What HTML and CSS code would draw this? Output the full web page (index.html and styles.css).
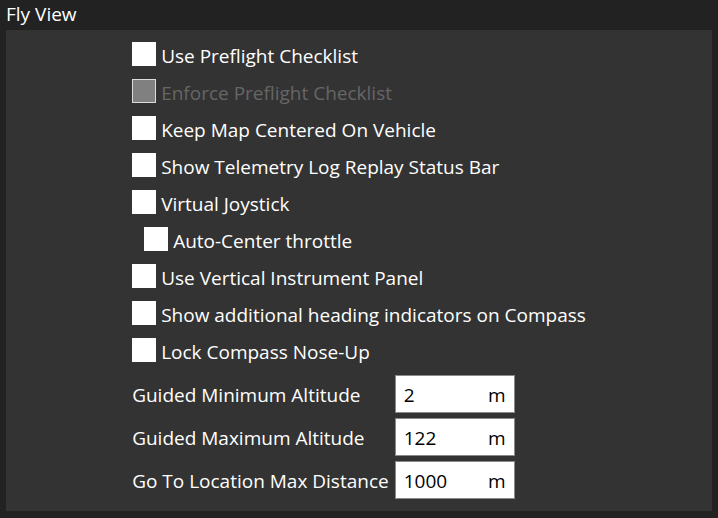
FILE: index.html
```html
<!DOCTYPE html>
<html>
<head>
<meta charset="utf-8">
<link rel="stylesheet" href="styles.css">
</head>
<body>
<div class="page">
  <div class="header">Fly View</div>
  <div class="panel">
    <div class="column">
      <div class="check-list">
        <label class="check"><span class="box"></span><span class="label">Use Preflight Checklist</span></label>
        <label class="check disabled"><span class="box"></span><span class="label">Enforce Preflight Checklist</span></label>
        <label class="check"><span class="box"></span><span class="label">Keep Map Centered On Vehicle</span></label>
        <label class="check"><span class="box"></span><span class="label">Show Telemetry Log Replay Status Bar</span></label>
        <label class="check"><span class="box"></span><span class="label">Virtual Joystick</span></label>
        <label class="check indent"><span class="box"></span><span class="label">Auto-Center throttle</span></label>
        <label class="check"><span class="box"></span><span class="label">Use Vertical Instrument Panel</span></label>
        <label class="check"><span class="box"></span><span class="label">Show additional heading indicators on Compass</span></label>
        <label class="check"><span class="box"></span><span class="label">Lock Compass Nose-Up</span></label>
      </div>
      <div class="fields">
        <span class="field-label">Guided Minimum Altitude</span>
        <div class="field"><span>2</span><span>m</span></div>
        <span class="field-label">Guided Maximum Altitude</span>
        <div class="field"><span>122</span><span>m</span></div>
        <span class="field-label">Go To Location Max Distance</span>
        <div class="field"><span>1000</span><span>m</span></div>
      </div>
    </div>
  </div>
</div>
</body>
</html>
```
FILE: styles.css
```css
html, body {
  margin: 0;
  padding: 0;
  background: #222222;
}
body {
  font-family: "Open Sans", "Noto Sans", sans-serif;
  font-size: 19px;
  color: #ffffff;
}
.page {
  width: 718px;
  height: 518px;
}
.header {
  height: 30px;
  line-height: 28px;
  padding-left: 6px;
}
.panel {
  margin-left: 6px;
  width: 706px;
  height: 481px;
  box-sizing: border-box;
  background: #333333;
  padding: 12px 0;
  display: flex;
  justify-content: center;
}
.column {
  display: flex;
  flex-direction: column;
  align-items: flex-start;
  gap: 13px;
}
.check-list {
  display: flex;
  flex-direction: column;
  gap: 13px;
}
.check {
  display: flex;
  align-items: center;
  height: 24px;
  gap: 5px;
  white-space: nowrap;
}
.label {
  padding-top: 3px;
}
.check.indent {
  padding-left: 12px;
}
.box {
  flex: none;
  width: 24px;
  height: 24px;
  background: #ffffff;
  box-sizing: border-box;
}
.check.disabled .box {
  background: #808080;
  border: 1px solid #dddddd;
}
.check.disabled .label {
  color: #666666;
}
.fields {
  display: grid;
  grid-template-columns: auto 120px;
  column-gap: 6px;
  row-gap: 5px;
  align-items: center;
  white-space: nowrap;
}
.field-label {
  padding-top: 2px;
}
.field {
  height: 38px;
  box-sizing: border-box;
  background: #ffffff;
  border: 1px solid #8a8a8a;
  color: #000000;
  display: flex;
  align-items: center;
  justify-content: space-between;
  padding: 2px 8px 0 8px;
}
```
